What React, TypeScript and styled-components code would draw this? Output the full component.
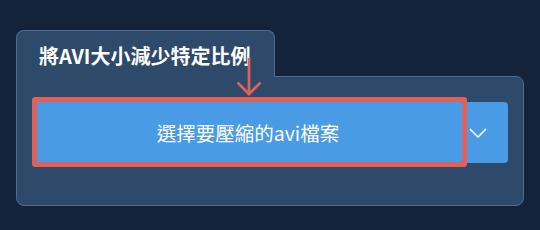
import React from 'react';
import styled, { createGlobalStyle } from 'styled-components';

const Global = createGlobalStyle`
  html, body {
    margin: 0;
    padding: 0;
    background: #12233a;
  }
  body {
    font-family: "Noto Sans CJK TC", "Noto Sans", sans-serif;
  }
`;

const Page = styled.div`
  width: 540px;
  height: 230px;
  box-sizing: border-box;
  padding: 30px 16px 0 16px;
  background: #12233a;
`;

const Tab = styled.div`
  position: relative;
  z-index: 1;
  width: 259px;
  height: 47px;
  box-sizing: border-box;
  margin-bottom: -1px;
  padding: 3px 0 0 22px;
  display: flex;
  align-items: center;
  background: #2d4a6b;
  border: 1px solid #4f6b8c;
  border-bottom: none;
  border-radius: 8px 8px 0 0;
  color: #ffffff;
  font-size: 20px;
  font-weight: 700;
  white-space: nowrap;
`;

const Panel = styled.div`
  width: 508px;
  height: 130px;
  box-sizing: border-box;
  padding: 25px 15px 0 16px;
  background: #2d4a6b;
  border: 1px solid #4f6b8c;
  border-radius: 0 8px 8px 8px;
`;

const ButtonGroup = styled.div`
  position: relative;
  display: flex;
  height: 61px;
`;

const MainButton = styled.button`
  flex: 1;
  border: none;
  margin: 0;
  background: #4a9be6;
  color: #ffffff;
  font-family: inherit;
  font-size: 19.5px;
  font-weight: 400;
  border-radius: 4px 0 0 4px;
  padding: 0;
`;

const DropButton = styled.button<{ $width: number }>`
  width: ${p => p.$width}px;
  border: none;
  margin: 0;
  padding: 0 0 0 6px;
  background: #4a9be6;
  border-radius: 0 4px 4px 0;
  display: flex;
  align-items: center;
`;

const Highlight = styled.div`
  position: absolute;
  left: -1px;
  top: -5px;
  width: 435px;
  height: 70px;
  box-sizing: border-box;
  border: 5px solid #e0605a;
  border-radius: 3px;
  pointer-events: none;
`;

const Arrow = styled.svg`
  position: absolute;
  z-index: 2;
  left: 203px;
  top: -44px;
  pointer-events: none;
`;

export default function App() {
  return (
    <>
      <Global />
      <Page>
        <Tab>將AVI大小減少特定比例</Tab>
        <Panel>
          <ButtonGroup>
            <MainButton>選擇要壓縮的avi檔案</MainButton>
            <DropButton $width={45}>
              <svg width="18" height="10" viewBox="0 0 18 10">
                <polyline points="1,1 9,9 17,1" fill="none" stroke="#ffffff" strokeWidth="1.6" />
              </svg>
            </DropButton>
            <Highlight />
            <Arrow width="26" height="40" viewBox="0 0 26 40">
              <line x1="13" y1="0" x2="13" y2="37" stroke="#e0605a" strokeWidth="2.8" />
              <polyline points="1.5,24.5 13,36 24.5,24.5" fill="none" stroke="#e0605a" strokeWidth="2.8" />
            </Arrow>
          </ButtonGroup>
        </Panel>
      </Page>
    </>
  );
}
